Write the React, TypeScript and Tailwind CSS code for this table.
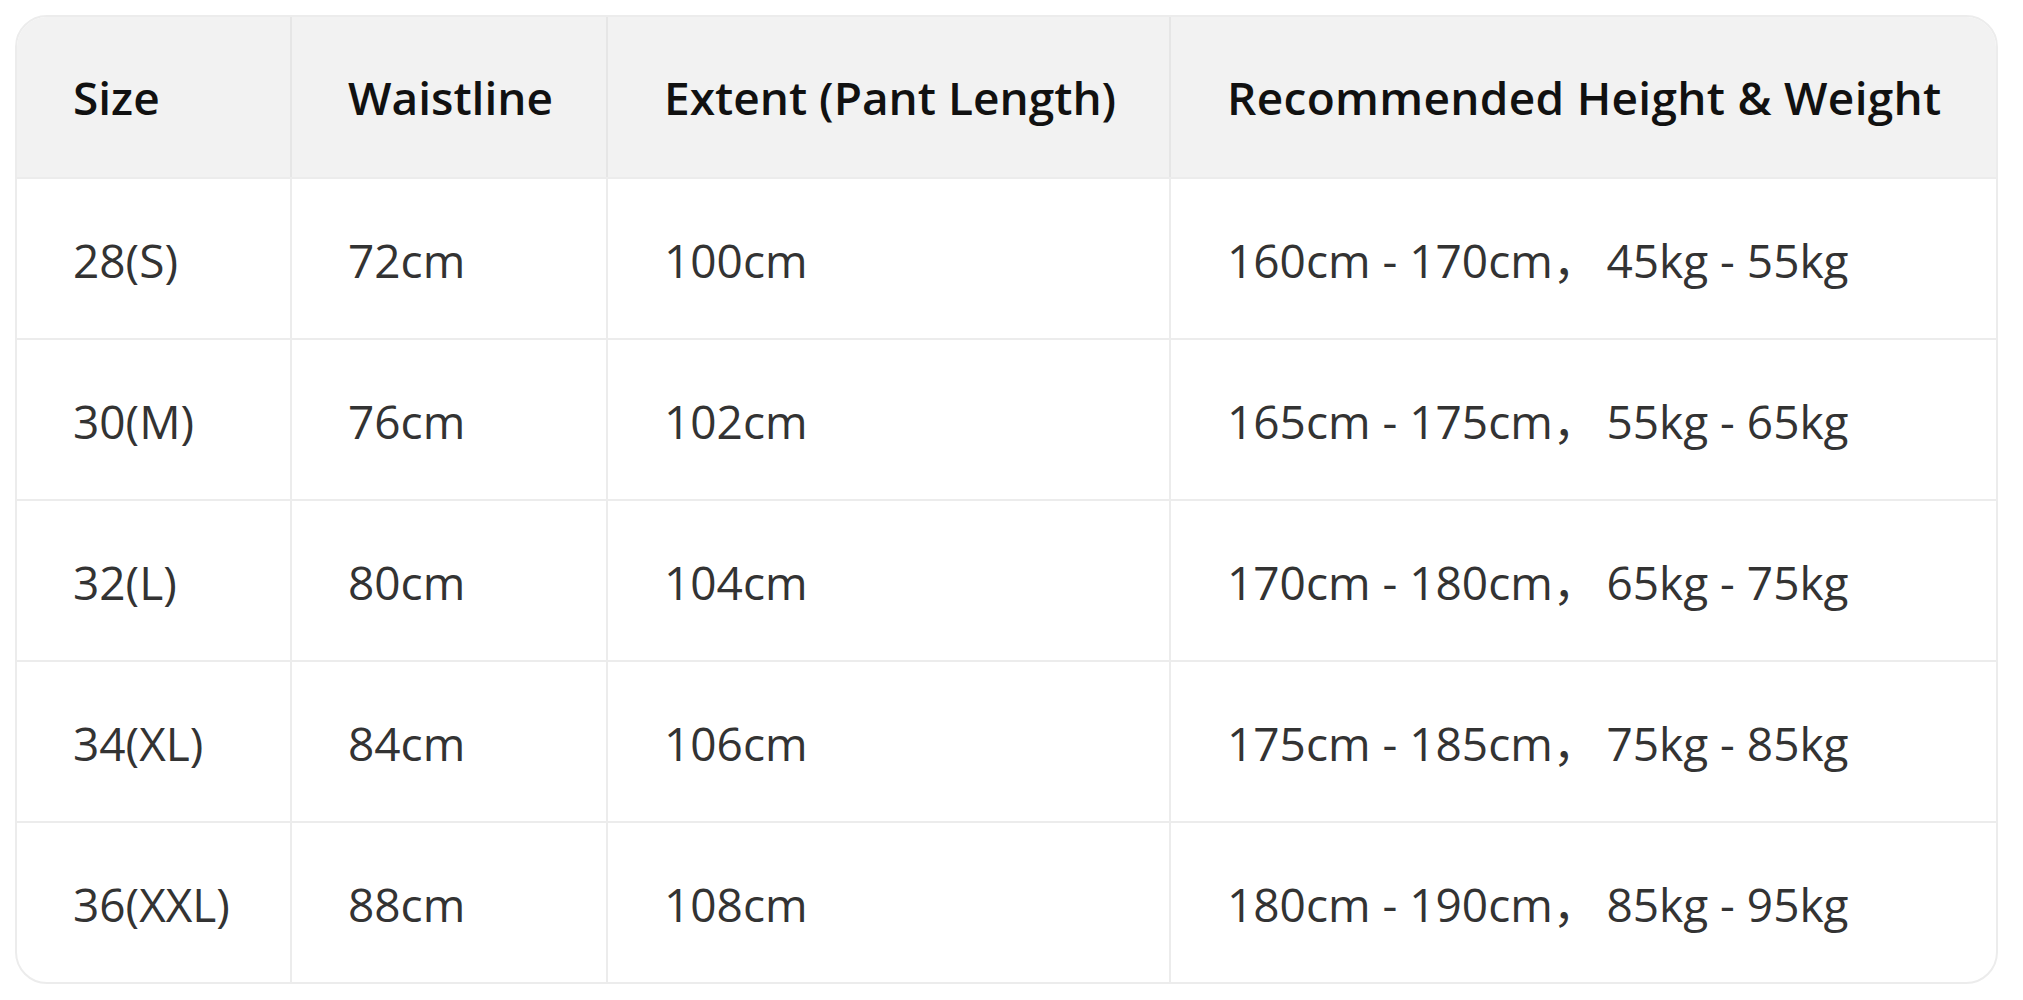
const rows = [
  { size: '28(S)', waist: '72cm', extent: '100cm', rec: '160cm - 170cm，\u200945kg - 55kg' },
  { size: '30(M)', waist: '76cm', extent: '102cm', rec: '165cm - 175cm，\u200955kg - 65kg' },
  { size: '32(L)', waist: '80cm', extent: '104cm', rec: '170cm - 180cm，\u200965kg - 75kg' },
  { size: '34(XL)', waist: '84cm', extent: '106cm', rec: '175cm - 185cm，\u200975kg - 85kg' },
  { size: '36(XXL)', waist: '88cm', extent: '108cm', rec: '180cm - 190cm，\u200985kg - 95kg' }
];

const headers = ['Size', 'Waistline', 'Extent (Pant Length)', 'Recommended Height & Weight'];

export default function App() {
  return (
    <div className="min-h-screen bg-white pl-[15px] pt-[15px] font-['Open_Sans','Noto_Sans_CJK_SC',sans-serif]">
      <div className="w-[1983px] overflow-hidden rounded-[32px] border-2 border-[#ececec] bg-white">
        <div className="grid h-[160px] grid-cols-[273px_316px_563px_1fr] bg-[#f2f2f2] text-[46px] font-semibold text-[#111]">
          {headers.map((h, i) => (
            <div key={h} className={`flex items-center pl-[56px] ${i > 0 ? 'border-l-2 border-[#e6e6e6]' : ''}`}>
              {i === 3 ? <span className="tracking-[0.3px]">{h}</span> : h}
            </div>
          ))}
        </div>
        {rows.map((r) => (
          <div
            key={r.size}
            className="grid h-[161px] grid-cols-[273px_316px_563px_1fr] border-t-2 border-[#ececec] text-[46px] text-[#333]"
          >
            <div className="flex items-center pl-[56px] pt-[4px]">{r.size}</div>
            <div className="flex items-center border-l-2 border-[#ececec] pl-[56px] pt-[4px]">{r.waist}</div>
            <div className="flex items-center border-l-2 border-[#ececec] pl-[56px] pt-[4px]">{r.extent}</div>
            <div className="flex items-center whitespace-pre border-l-2 border-[#ececec] pl-[56px] pt-[4px]">{r.rec}</div>
          </div>
        ))}
      </div>
    </div>
  );
}
